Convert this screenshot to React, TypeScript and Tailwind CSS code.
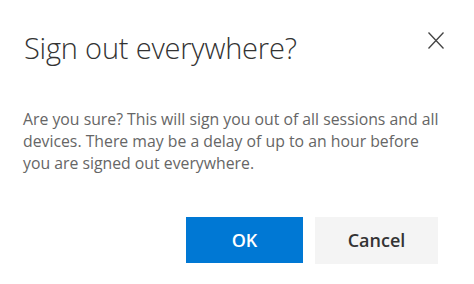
import React from "react";

export default function App() {
  return (
    <div className="w-[474px] h-[284px] bg-white overflow-hidden relative" style={{ fontFamily: '"Open Sans", "Noto Sans", sans-serif' }}>
      <div className="pl-[24px] pr-[28px] pt-[26px] flex items-start justify-between">
        <h1 className="text-[29px] leading-[44px] font-light text-[#333] tracking-[-0.2px] whitespace-nowrap">Sign out everywhere?</h1>
        <button className="mt-[4px] w-[20px] h-[20px] flex items-center justify-center text-[#444]">
          <svg width="16" height="17" viewBox="0 0 16 17" fill="none" stroke="currentColor" strokeWidth="1.3">
            <path d="M0.5 0.5 L15.5 16.5 M15.5 0.5 L0.5 16.5" />
          </svg>
        </button>
      </div>
      <div className="pl-[23px] pt-[38px] text-[15.8px] leading-[22px] text-[#666] whitespace-nowrap">
        <div>Are you sure? This will sign you out of all sessions and all</div>
        <div>devices. There may be a delay of up to an hour before</div>
        <div>you are signed out everywhere.</div>
      </div>
      <div className="flex justify-end gap-[12px] pr-[36px] pt-[43px]">
        <button className="w-[117px] h-[46px] bg-[#0078d4] text-white text-[18px] font-semibold">OK</button>
        <button className="w-[123px] h-[47px] bg-[#f4f4f4] text-[#333] text-[18px] font-semibold">Cancel</button>
      </div>
    </div>
  );
}
